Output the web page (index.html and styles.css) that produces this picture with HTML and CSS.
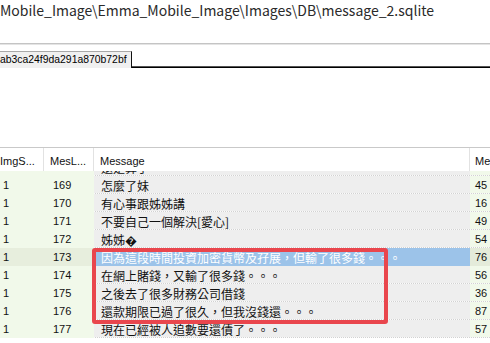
FILE: index.html
```html
<!DOCTYPE html>
<html>
<head>
<meta charset="utf-8">
<link rel="stylesheet" href="styles.css">
</head>
<body>
<div class="page">
  <div class="path">Mobile_Image\Emma_Mobile_Image\Images\DB\message_2.sqlite</div>
  <div class="sep"></div>
  <div class="tabs">
    <div class="tab">ab3ca24f9da291a870b72bf</div>
    <div class="tab-rest"></div>
  </div>
  <div class="blank"></div>
  <div class="grid">
    <div class="head">
      <div class="c c1">ImgS...</div>
      <div class="c c2">MesL...</div>
      <div class="c c3">Message</div>
      <div class="c c4">Me</div>
    </div>
    <div class="body">
      <div class="row first"><div class="c c1">1</div><div class="c c2">168</div><div class="c c3">還是算了</div><div class="c c4">51</div></div>
      <div class="row"><div class="c c1">1</div><div class="c c2">169</div><div class="c c3">怎麼了妹</div><div class="c c4">45</div></div>
      <div class="row"><div class="c c1">1</div><div class="c c2">170</div><div class="c c3">有心事跟姊姊講</div><div class="c c4">16</div></div>
      <div class="row"><div class="c c1">1</div><div class="c c2">171</div><div class="c c3">不要自己一個解決[愛心]</div><div class="c c4">49</div></div>
      <div class="row"><div class="c c1">1</div><div class="c c2">172</div><div class="c c3">姊姊�</div><div class="c c4">54</div></div>
      <div class="row sel"><div class="c c1">1</div><div class="c c2">173</div><div class="c c3">因為這段時間投資加密貨幣及孖展，但輸了很多錢。。。</div><div class="c c4">76</div></div>
      <div class="row"><div class="c c1">1</div><div class="c c2">174</div><div class="c c3">在網上賭錢，又輸了很多錢。。。</div><div class="c c4">56</div></div>
      <div class="row"><div class="c c1">1</div><div class="c c2">175</div><div class="c c3">之後去了很多財務公司借錢</div><div class="c c4">36</div></div>
      <div class="row"><div class="c c1">1</div><div class="c c2">176</div><div class="c c3">還款期限已過了很久，但我沒錢還。。。</div><div class="c c4">87</div></div>
      <div class="row"><div class="c c1">1</div><div class="c c2">177</div><div class="c c3">現在已經被人追數要還債了。。。</div><div class="c c4">57</div></div>
    </div>
    <div class="mark"></div>
  </div>
</div>
</body>
</html>
```
FILE: styles.css
```css
* { box-sizing: border-box; }
html, body { margin: 0; padding: 0; background: #fff; }
.page {
  width: 490px;
  height: 343px;
  overflow: hidden;
  position: relative;
  font-family: "Liberation Sans", "Noto Sans CJK TC", sans-serif;
  color: #000;
}
.path {
  height: 43px;
  line-height: 20px;
  font-family: "Noto Sans CJK SC", "Liberation Sans", sans-serif;
  font-size: 14px;
  color: #2a2a2a;
  white-space: nowrap;
  overflow: hidden;
}
.sep {
  height: 2px;
  border-top: 1px solid #c4c4c4;
  border-bottom: 1px solid #e4e4e4;
}
.tabs {
  display: flex;
  align-items: flex-end;
  height: 23px;
}
.tab {
  width: 132px;
  height: 17px;
  background: #f0f0f0;
  border-top: 1px solid #a8a8a8;
  border-right: 1px solid #111;
  font-size: 10.4px;
  line-height: 15px;
  white-space: nowrap;
  color: #000;
}
.tab-rest {
  flex: 1;
  height: 2px;
  border-top: 1px solid #555;
  border-bottom: 1px solid #000;
}
.blank { height: 79px; }
.grid {
  position: relative;
  border-top: 1px solid #c9c9c9;
  box-shadow: inset 0 1px 0 #e6e6e6;
}
.head {
  display: grid;
  grid-template-columns: 44px 50px 376px 20px;
  height: 23px;
  background: #fff;
}
.head .c {
  font-size: 11px;
  line-height: 20px;
  padding-top: 3px;
  color: #111;
  border-right: 1px solid #e2e2e2;
  white-space: nowrap;
}
.head .c1 { padding-left: 0; }
.head .c2 { padding-left: 6px; }
.head .c3 { padding-left: 6px; }
.head .c4 { padding-left: 5px; border-right: 0; }
.body {
  height: 174px;
  overflow: hidden;
}
.row {
  display: grid;
  grid-template-columns: 44px 50px 376px 20px;
  height: 18px;
}
.row.first { margin-top: -13px; }
.row .c {
  font-size: 11px;
  line-height: 19px;
  white-space: nowrap;
  overflow: hidden;
  color: #111;
}
.row .c1, .row .c2 { background: #f1f9ea; }
.row .c1 { padding-left: 3px; }
.row .c2 { padding-left: 9px; }
.row .c3 {
  padding-left: 7px;
  font-size: 12px;
  font-family: "Noto Sans CJK TC", "Liberation Sans", sans-serif;
  background-color: #eeeeee;
  background-image: linear-gradient(to right, #fbfbfb 50%, #d2d2d2 50%);
  background-size: 2px 1px;
  background-repeat: repeat-x;
  background-position: left bottom;
}
.row .c4 {
  padding-left: 5px;
  background-color: #f1f9ea;
  background-image: linear-gradient(to right, #fbfbfb 50%, #d2d2d2 50%);
  background-size: 2px 1px;
  background-repeat: repeat-x;
  background-position: left bottom;
}
.row.sel .c1, .row.sel .c2 { background: #e7eedd; }
.row.sel .c3 {
  background: #9cc3e9;
  color: #fff;
}
.row.sel .c4 { background: #e4ebda; }
.mark {
  position: absolute;
  left: 92px;
  top: 100px;
  width: 296px;
  height: 76px;
  border: 4px solid #e9464d;
  border-radius: 3px;
}
```
